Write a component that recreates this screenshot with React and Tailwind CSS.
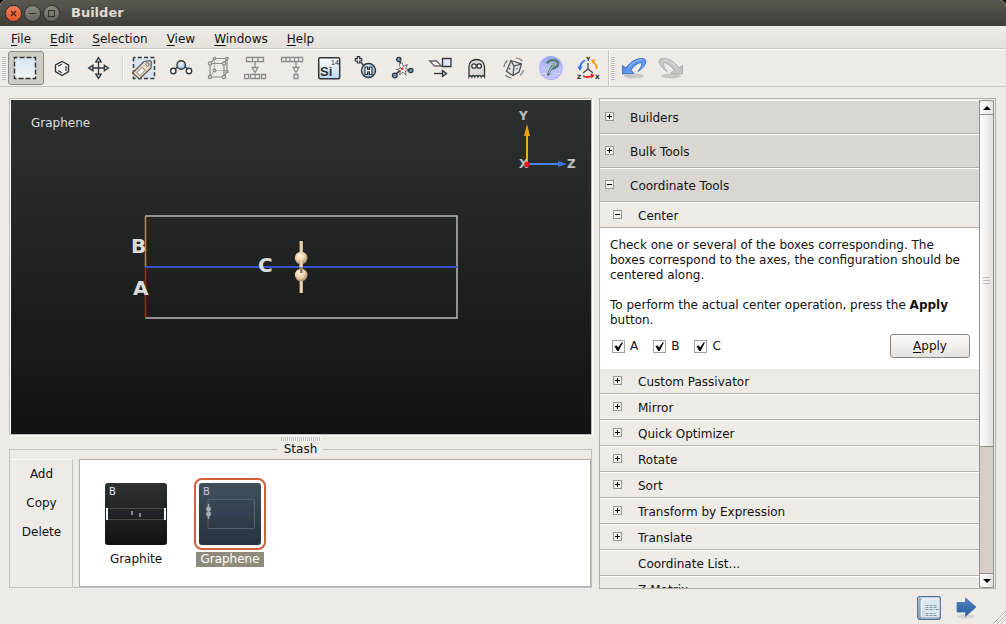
import { useState } from 'react'

const INK = '#2f3436'
const FADED = '#8b8b88'

function SelectIcon() {
  return (
    <>
      <defs>
        <linearGradient id="sel" x1="0" y1="0" x2="0" y2="1">
          <stop offset="0" stopColor="#d6e6f5" />
          <stop offset="1" stopColor="#f4f4f2" />
        </linearGradient>
      </defs>
      <rect x=".5" y="1.500" width="21" height="21" fill="url(#sel)" stroke={INK} strokeWidth="1.400" strokeDasharray="5 2" strokeDashoffset="2" />
    </>
  )
}

function RingIcon() {
  return (
    <g fill="none" stroke={INK} strokeWidth="1.400">
      <path d="M11 5.500l6.500 3.500v6.500L11 19.500l-6.500-4V9z" fill="#f5f4f2" />
      <path d="M7 10.200l4-2.200M15 10v5M7 14.500l4 2.300" strokeWidth="1.200" />
    </g>
  )
}

function MoveIcon() {
  return (
    <g stroke={INK} strokeWidth="1.300" fill="#c4d9ea">
      <path d="M10.500 6v12.500M4 12h13" />
      <path d="M10.500 1.500l2.700 4.300H7.800zM10.500 22.500l2.700-4.300H7.800zM.7 12l4.200-2.700v5.400zM20.500 12l-4.200-2.700v5.400z" />
    </g>
  )
}

function TagIcon() {
  return (
    <>
      <rect x=".5" y="1.500" width="21" height="21" fill="#d9e6f1" stroke={INK} strokeWidth="1.500" strokeDasharray="4 2.300" strokeDashoffset="2" />
      <path d="M-.5 17L11 5.500l6-.8 1.300 1.300-.3 6L6.500 23z" fill="#eed9c2" stroke="#5a5350" strokeWidth="1.200" />
      <circle cx="14.500" cy="8.500" r="1.600" fill="#fff" stroke="#5a5350" />
      <path d="M4 16.500l5-5.200 3.200 3L7 19.500z" fill="#fff" stroke="#777" />
    </>
  )
}

function MoleculeIcon() {
  return (
    <>
      <defs>
        <radialGradient id="mol" cx=".4" cy=".3" r=".8">
          <stop offset="0" stopColor="#f4f9fd" />
          <stop offset="1" stopColor="#8fb8da" />
        </radialGradient>
      </defs>
      <g stroke={INK} strokeWidth="1.400">
        <path d="M5 13l4-3M14 10l4 3" />
        <circle cx="11.200" cy="9" r="4.200" fill="url(#mol)" />
        <circle cx="3.300" cy="15" r="2.700" fill="#fff" />
        <circle cx="19" cy="15" r="2.700" fill="#fff" />
      </g>
    </>
  )
}

function CubeIcon() {
  return (
    <g stroke={FADED} strokeWidth="1.200" fill="none">
      <path d="M3 7.500h14v13.500H3zM3 7.500l4.500-5h12.500v13L17 21M17 7.500l3-5" />
      <path d="M7.500 2.500v12H20M7.500 14.500L3 21" opacity=".5" />
      <g fill="#dedcd9">
        <circle cx="3" cy="7.500" r="1.700" />
        <circle cx="17" cy="7.500" r="1.700" />
        <circle cx="3" cy="21" r="1.700" />
        <circle cx="17" cy="21" r="1.700" />
        <circle cx="20" cy="2.500" r="1.200" />
        <circle cx="20" cy="15.500" r="1.200" />
        <circle cx="7.500" cy="14.500" r="1.400" />
        <circle cx="7.500" cy="2.500" r="1.200" />
      </g>
    </g>
  )
}

function SplitIcon() {
  return (
    <g stroke={FADED} strokeWidth="1.300" fill="#f5f4f2">
      <path d="M2.500 1.500h17v4h-17zM8.500 2v3M14 2v3" />
      <path d="M11 6v5.500M8 11.500h6L11 16.500z" />
      <path d="M.6 18.500h4v4h-4zM6.500 18.500h9v4h-9zM11 18.500v4M17.500 18.500h4v4h-4z" />
    </g>
  )
}

function ReduceIcon() {
  return (
    <g stroke={FADED} strokeWidth="1.300" fill="#f5f4f2">
      <path d="M.6 1.500h21v4H.6zM5 2v3M9 2v3M13.500 2v3M17.500 2v3" />
      <path d="M15 6v5.500M12 11.500h6L15 16.500zM13 18.500h4v4h-4z" />
    </g>
  )
}

function ElementIcon() {
  return (
    <>
      <defs>
        <linearGradient id="si" x1="0" y1="0" x2="0" y2="1">
          <stop offset="0" stopColor="#fff" />
          <stop offset="1" stopColor="#bdd6ee" />
        </linearGradient>
      </defs>
      <rect x=".7" y="1.700" width="21" height="21" rx="1.500" fill="url(#si)" stroke={INK} strokeWidth="1.500" />
      <text x="2" y="20" fontSize="13" fontWeight="bold" fill="#333" fontFamily="Liberation Sans, sans-serif">Si</text>
      <text x="13" y="9" fontSize="7" fill="#222" fontFamily="Liberation Sans, sans-serif">14</text>
    </>
  )
}

function HydrogenIcon() {
  return (
    <>
      <defs>
        <radialGradient id="hyd" cx=".4" cy=".3" r=".8">
          <stop offset="0" stopColor="#e4f0fb" />
          <stop offset="1" stopColor="#7fb2ea" />
        </radialGradient>
      </defs>
      <path d="M5.500 6l4 4" stroke={INK} strokeWidth="1.500" />
      <path d="M2.400.7h2.300v2h2v2.300h-2v2H2.400V5H.4V2.700h2z" fill="#fff" stroke={INK} strokeWidth="1.200" />
      <circle cx="13.500" cy="14.500" r="7" fill="url(#hyd)" stroke={INK} strokeWidth="1.400" />
      <path d="M10 11h2.600v2.300h1.800V11H17v7.500h-2.600v-2.600h-1.800v2.600H10z" fill="#fff" stroke={INK} strokeWidth="1.200" />
    </>
  )
}

function NetworkIcon() {
  return (
    <>
      <path d="M7 3l3 10L2.500 19M10 13l9 1.500" stroke={INK} strokeWidth="1.500" fill="none" />
      <path d="M10 6.500l1.500 4 4-2-1.800 4 4 2-4.200.5.500 4.200-3-3-3.500 2.700 1-4.200-4-1.200 4-1.200-1.300-4z" fill="#f3efeb" stroke="#555" strokeWidth=".8" />
      <circle cx="10.300" cy="12.800" r="1.300" fill="#d22" />
      <g fill="#6c9dc0" stroke={INK} strokeWidth="1.200">
        <circle cx="6.800" cy="3.500" r="2.200" />
        <circle cx="2.800" cy="19.500" r="2.400" />
        <circle cx="18.800" cy="14.500" r="2.200" />
      </g>
    </>
  )
}

function PlaneIcon() {
  return (
    <g stroke={INK} strokeWidth="1.300">
      <path d="M.7 5h7l4.500 5H5.500z" fill="#fff" stroke="#666" />
      <path d="M13.500 2.500h8.500v8h-8.500z" fill="#dbe7f2" />
      <path d="M5 17.500h9" />
      <path d="M13.500 14.500v6l4-3z" fill="#9fc3e2" />
    </g>
  )
}

function GhostIcon() {
  return (
    <g stroke={INK} strokeWidth="1.300">
      <path d="M3 21V10.500C3 6 6.500 3.500 10.500 3.500S18 6 18.500 10.500V21c-1.300-2-2.300-2-3.300 0-1-2-2.500-2-3.300 0-1-2-2.500-2-3.300 0-1-2-2.200-2-2.800 0C5 19.300 4 19.300 3 21z" fill="#dcdbd9" />
      <circle cx="8" cy="10" r="2.200" fill="#fff" />
      <circle cx="13.200" cy="10" r="2.200" fill="#fff" />
    </g>
  )
}

function ShakeIcon() {
  return (
    <g fill="none" stroke="#4b4b49" strokeWidth="1.200">
      <path d="M8 4.500l10.500 3.500-2.500 8-6 3.500-6.500-4z" fill="#dfe3e6" />
      <path d="M8 4.500l3 5.500 7.500-2M11 10l-1 9.500" />
      <path d="M6 12.500l1 .5M13.500 13l1-.5" strokeWidth="1.400" />
      <path d="M1 11c.3-3 1.500-5 3.500-6.500M13 2c3 .3 5 1.300 6.500 3M20.500 14c-.5 2.500-1.500 4-3.500 5.500M8.500 22c-2.500-.3-4.500-1.300-6-3" stroke="#777" />
    </g>
  )
}

function WizardIcon() {
  return (
    <>
      <defs>
        <linearGradient id="wiz" x1="0" y1="0" x2="0" y2="1">
          <stop offset="0" stopColor="#98a2f2" />
          <stop offset=".55" stopColor="#bfc4fa" />
          <stop offset="1" stopColor="#a0a5f6" />
        </linearGradient>
      </defs>
      <circle cx="11" cy="12" r="12" fill="url(#wiz)" />
      <path d="M1.500 17.500h6M13 17.500h7.500M3.500 20h15M6.500 22.300h9" stroke="#e8eaff" strokeOpacity=".8" fill="none" />
      <path d="M7 7.500c1.500-4 10.500-4.500 11-.5.300 3.500-3.500 5.500-8 6" fill="none" stroke="#557f78" strokeWidth="2.600" />
      <path d="M13.500 7.500c1 2-4.500 5-5.500 12" fill="none" stroke="#496f66" strokeWidth="2.400" />
      <path d="M8.500 8.500c1.500-1 4-.5 5 .5M13.500 8.500c.5 2-3.500 4-4.800 8.500" fill="none" stroke="#a9cdb6" strokeWidth="1.200" />
    </>
  )
}

function AxesIcon() {
  return (
    <>
      <path d="M11 7v6l-5 4M11 13l5 4" fill="none" stroke="#444" strokeWidth="1.300" />
      <path d="M8 4.500c-2.500 1-4.500 3.500-5 7" fill="none" stroke="#2874e0" strokeWidth="1.800" />
      <path d="M.6 10.500h5L2.800 15z" fill="#2874e0" />
      <path d="M19.500 13c.3-3-1.500-6-4-7.500" fill="none" stroke="#f29a16" strokeWidth="1.800" />
      <path d="M13.500 3.500l5 .3-2.500 4z" fill="#f29a16" />
      <path d="M6 20c3 1.300 6 1.300 9 0" fill="none" stroke="#e01818" strokeWidth="1.800" />
      <path d="M13.500 17.500l4 1.500-3 3.500z" fill="#e01818" />
      <g fontFamily="DejaVu Sans, sans-serif" fontWeight="bold" fontSize="6" fill="#222">
        <text x="9" y="5">Y</text>
        <text x="0" y="23">Z</text>
        <text x="18" y="23">X</text>
      </g>
    </>
  )
}

function CurvedArrow({ id, from, to, edge, flip }) {
  return (
    <g transform={flip ? 'translate(24 0) scale(-1 1)' : undefined}>
      <defs>
        <linearGradient id={id} x1="0" y1="0" x2="1" y2="1">
          <stop offset="0" stopColor={from} />
          <stop offset="1" stopColor={to} />
        </linearGradient>
      </defs>
      <ellipse cx="12" cy="20" rx="10" ry="2.500" fill="#000" opacity=".16" />
      <path
        d="M.5 9.500V18l11.500-.8-3-3C12 10 15.500 7 18.500 6.800c2.300 0 1 4.200-2.500 8.700C21.500 12 24.500 7.500 23.700 4.500 22.800 1.800 17 2 12.500 4.300 9 6.200 6 9 4 12z"
        fill={`url(#${id})`}
        stroke={edge}
        strokeWidth=".8"
      />
      <path d="M6.500 11.500C10 7 15 4 20 3.500" fill="none" stroke="#fff" strokeOpacity=".45" strokeWidth="1.200" />
    </g>
  )
}

const tools = [
  [
    { label: 'Select', icon: <SelectIcon />, active: true },
    { label: 'Ring', icon: <RingIcon /> },
    { label: 'Move', icon: <MoveIcon /> },
  ],
  [
    { label: 'Tags', icon: <TagIcon /> },
    { label: 'Molecule', icon: <MoleculeIcon /> },
    { label: 'Cell', icon: <CubeIcon /> },
    { label: 'Split', icon: <SplitIcon /> },
    { label: 'Reduce', icon: <ReduceIcon /> },
    { label: 'Element', icon: <ElementIcon /> },
    { label: 'Add hydrogen', icon: <HydrogenIcon /> },
    { label: 'Fragment', icon: <NetworkIcon /> },
    { label: 'Plane', icon: <PlaneIcon /> },
    { label: 'Ghost', icon: <GhostIcon /> },
    { label: 'Rattle', icon: <ShakeIcon /> },
    { label: 'Wizard', icon: <WizardIcon /> },
    { label: 'Swap axes', icon: <AxesIcon /> },
  ],
  [
    { label: 'Undo', icon: <CurvedArrow id="undo" from="#2f6fdd" to="#8fc0fa" edge="#2860c8" /> },
    { label: 'Redo', icon: <CurvedArrow id="redo" from="#b9b8b6" to="#d6d5d3" edge="#a3a2a0" flip /> },
  ],
]

const menus = ['File', 'Edit', 'Selection', 'View', 'Windows', 'Help']
const groups = ['Builders', 'Bulk Tools', 'Coordinate Tools']
const coordinateTools = [
  'Custom Passivator',
  'Mirror',
  'Quick Optimizer',
  'Rotate',
  'Sort',
  'Transform by Expression',
  'Translate',
]

function TitleBar() {
  return (
    <header className="flex h-[26px] shrink-0 items-center rounded-t-md bg-linear-to-b from-[#5a574f] to-[#3e3d38] pl-[5px]">
      <button type="button" aria-label="Close" className="flex size-[17px] items-center justify-center rounded-full border border-[#33322e] bg-linear-to-b from-[#f5805a] to-[#e0532a]">
        <svg viewBox="0 0 9 9" className="size-[9px]" stroke="#45261b" strokeWidth="1.200">
          <path d="M2 2l5 5M7 2L2 7" />
        </svg>
      </button>
      <button type="button" aria-label="Minimize" className="ml-0.5 flex size-[17px] items-center justify-center rounded-full border border-[#33322e] bg-linear-to-b from-[#8d8a80] to-[#66645c]">
        <span className="h-px w-[7px] bg-[#32312c]" />
      </button>
      <button type="button" aria-label="Maximize" className="ml-0.5 flex size-[17px] items-center justify-center rounded-full border border-[#33322e] bg-linear-to-b from-[#8d8a80] to-[#66645c]">
        <span className="size-[7px] border border-[#32312c]" />
      </button>
      <h1 className="ml-[11px] text-[13px] font-bold text-[#dfdbd2]">Builder</h1>
    </header>
  )
}

function MenuBar() {
  return (
    <nav className="flex h-[23px] shrink-0 items-center gap-[19px] border-b border-[#cfccc7] bg-linear-to-b from-[#eeebe7] to-[#e4e1dc] pl-[11px]">
      {menus.map((menu) => (
        <button key={menu} type="button" className="pt-1 leading-[18px]">
          <span className="underline underline-offset-2">{menu[0]}</span>
          {menu.slice(1)}
        </button>
      ))}
    </nav>
  )
}

function Grip() {
  return <span className="h-[23px] w-[4px] bg-[repeating-linear-gradient(to_bottom,#c0bdb8_0_1px,#f8f7f5_1px_2px)]" />
}

function ToolButton({ label, icon, active }) {
  return (
    <button
      type="button"
      aria-label={label}
      aria-pressed={active}
      className={`flex h-[34px] w-[36px] items-center rounded-[3px] pl-[5px] ${
        active ? 'border border-[#8f8b86] bg-[#cfcac4]' : 'border border-transparent'
      }`}
    >
      <svg viewBox="0 0 24 24" className="size-6 shrink-0 overflow-visible">
        {icon}
      </svg>
    </button>
  )
}

function Toolbar() {
  return (
    <div role="toolbar" className="flex h-[38px] shrink-0 items-center gap-px border-t border-b border-t-white border-b-[#cbc8c4] pl-0.5">
      <span className="flex w-[5px]">
        <Grip />
      </span>
      {tools[0].map((tool) => (
        <ToolButton key={tool.label} {...tool} />
      ))}
      <span className="flex w-[7px] justify-center">
        <span className="h-6 w-0.5 border-r border-l border-r-white border-l-[#d5d2ce]" />
      </span>
      {tools[1].map((tool) => (
        <ToolButton key={tool.label} {...tool} />
      ))}
      <span className="flex w-[7px] items-center justify-between self-stretch border-l border-[#c4c1bd]">
        <span className="w-px self-stretch bg-white" />
        <Grip />
      </span>
      {tools[2].map((tool) => (
        <ToolButton key={tool.label} {...tool} />
      ))}
    </div>
  )
}

function Scene() {
  return (
    <svg viewBox="0 0 580 334" className="absolute inset-0 size-full" fontFamily="DejaVu Sans, sans-serif" fontWeight="bold">
      <defs>
        <radialGradient id="atom" cx=".4" cy=".35" r=".7">
          <stop offset="0" stopColor="#fff3e0" />
          <stop offset=".6" stopColor="#e8c9a3" />
          <stop offset="1" stopColor="#8d7860" />
        </radialGradient>
        <linearGradient id="rod">
          <stop offset="0" stopColor="#c9a97e" />
          <stop offset=".5" stopColor="#fae6c4" />
          <stop offset="1" stopColor="#b3946b" />
        </linearGradient>
      </defs>
      <path d="M134 116h312v102H134" fill="none" stroke="#b9b9b9" strokeWidth="1.500" />
      <path d="M134.500 116v51" stroke="#d9861d" strokeWidth="1.500" />
      <path d="M134.500 167v51" stroke="#c8161a" strokeWidth="1.500" />
      <path d="M134 167h312" stroke="#3650c8" strokeWidth="2" />
      <rect x="288.500" y="141" width="3.500" height="52" fill="url(#rod)" />
      <circle cx="290.200" cy="158" r="6.300" fill="url(#atom)" />
      <circle cx="290.200" cy="175" r="6.300" fill="url(#atom)" />
      <rect x="288.500" y="160" width="3.500" height="7" fill="url(#rod)" />
      <rect x="289" y="167" width="2.500" height="6" fill="#8a7a66" />
      <g fill="#dcdcdc" fontSize="20">
        <text x="120" y="153">B</text>
        <text x="122" y="195">A</text>
        <text x="247" y="172">C</text>
      </g>
      <path d="M516 64V34" stroke="#f2a90a" strokeWidth="2" />
      <path d="M516 24l3 12h-6z" fill="#f0a010" />
      <g fill="#c0c0c0" fontSize="12">
        <text x="508" y="20">Y</text>
        <text x="508" y="68">X</text>
        <text x="556" y="68">Z</text>
      </g>
      <path d="M516 64h34" stroke="#4a86f0" strokeWidth="2" />
      <path d="M556 64l-9-3v6z" fill="#3f74e0" />
      <circle cx="516" cy="64.500" r="2.800" fill="#f01010" />
    </svg>
  )
}

function Viewport() {
  return (
    <div className="flex min-h-0 flex-1 border border-[#c0bcb7] bg-white pt-px pl-px shadow-[1px_1px_0_#fff]">
      <div className="relative flex-1 bg-linear-to-b from-[#2f3131] to-[#121212]">
        <p className="pt-4 pl-5 leading-[15px] text-[#dedede]">Graphene</p>
        <Scene />
      </div>
    </div>
  )
}

function GraphiteThumb() {
  return (
    <svg viewBox="0 0 62 62" className="size-[62px] rounded-[3px] bg-linear-to-b from-[#303232] to-[#131313]">
      <path d="M2 25.500h58M2 36.500h58" stroke="#4b4d4d" />
      <path d="M3 31h56" stroke="#20243c" />
      <path d="M1 25h2v12H1zM59 25h2v12h-2z" fill="#f2fafa" />
      <path d="M27 28v4M35 30v4" stroke="#aeb0b0" strokeWidth="1.500" />
      <text x="4" y="12" fontSize="10" fill="#e6e6e6" fontFamily="DejaVu Sans, sans-serif">B</text>
    </svg>
  )
}

function GrapheneThumb() {
  return (
    <svg viewBox="0 0 62 62" className="size-[62px] rounded-[3px] bg-linear-to-b from-[#414f5c] to-[#27333e]">
      <path d="M9 16.500h46.500v29H9z" fill="none" stroke="#52606b" />
      <path d="M9 31h46" stroke="#33466a" />
      <path d="M9 31v14" stroke="#5a3f4a" />
      <path d="M9.500 21v15" stroke="#9aa5ad" strokeWidth="1.500" />
      <circle cx="9.500" cy="26" r="2.500" fill="#a3adb3" />
      <circle cx="9.500" cy="31" r="2.500" fill="#a3adb3" />
      <text x="4" y="12" fontSize="10" fill="#c5d0d8" fontFamily="DejaVu Sans, sans-serif">B</text>
    </svg>
  )
}

function StashItem({ name, thumb, selected, onSelect }) {
  return (
    <button type="button" aria-pressed={selected} onClick={onSelect} className="flex flex-col items-center gap-0.5">
      <span className={`rounded-lg border-2 p-[3px] ${selected ? 'border-[#d2603c]' : 'border-transparent'}`}>{thumb}</span>
      <span className={`px-1 leading-[15px] ${selected ? 'bg-[#8f8b7b] text-white' : ''}`}>{name}</span>
    </button>
  )
}

function Stash() {
  const [selected, setSelected] = useState('Graphene')

  return (
    <fieldset className="min-w-0 border border-[#c4c1bd]">
      <legend className="mx-auto px-1.5 leading-[15px]">Stash</legend>
      <div className="flex h-[130px] gap-1.5 pt-0.5 pl-px">
        <div className="flex w-[62px] shrink-0 flex-col border-t border-r border-t-white border-r-[#c4c1bd]">
          {['Add', 'Copy', 'Delete'].map((action) => (
            <button key={action} type="button" className="h-[29px] pb-px">
              {action}
            </button>
          ))}
        </div>
        <div className="flex min-w-0 flex-1 items-start gap-[22px] border border-[#b4afa8] bg-white pt-[18px] pl-5">
          <StashItem name="Graphite" thumb={<GraphiteThumb />} selected={selected === 'Graphite'} onSelect={() => setSelected('Graphite')} />
          <StashItem name="Graphene" thumb={<GrapheneThumb />} selected={selected === 'Graphene'} onSelect={() => setSelected('Graphene')} />
        </div>
      </div>
    </fieldset>
  )
}

function Expander({ open }) {
  return (
    <svg viewBox="0 0 9 9" className="-mt-0.5 size-[9px] shrink-0" shapeRendering="crispEdges">
      <rect x=".5" y=".5" width="8" height="8" fill="#f4f2ef" stroke="#98958f" />
      <path d={open ? 'M2 4.500h5' : 'M2 4.500h5M4.500 2v5'} stroke="#000" />
    </svg>
  )
}

function GroupRow({ name, open }) {
  return (
    <button
      type="button"
      aria-expanded={open}
      className="flex h-[34px] w-full shrink-0 items-center gap-4 border-t border-b border-t-white border-b-[#b3b0ac] bg-[#dad7d2] pt-px pl-[5px] text-left"
    >
      <Expander open={open} />
      {name}
    </button>
  )
}

function ToolRow({ name, open }) {
  return (
    <button
      type="button"
      aria-expanded={open}
      className="flex h-[26px] w-full shrink-0 items-center gap-4 border-t border-b border-t-white border-b-[#b3b0ac] bg-[#eeebe7] pt-px pl-[13px] text-left"
    >
      <Expander open={open} />
      {name}
    </button>
  )
}

function LeafRow({ name }) {
  return (
    <button
      type="button"
      className="flex h-[26px] w-full shrink-0 items-center border-t border-b border-t-white border-b-[#b3b0ac] bg-[#eeebe7] pt-px pl-[38px] text-left"
    >
      {name}
    </button>
  )
}

function AxisCheckbox({ axis }) {
  return (
    <label className="flex items-center gap-[5px]">
      <span className="grid">
        <input type="checkbox" defaultChecked className="peer col-start-1 row-start-1 size-[13px] appearance-none border border-[#a5a29d] bg-white" />
        <svg viewBox="0 0 13 13" className="pointer-events-none invisible col-start-1 row-start-1 size-[13px] peer-checked:visible">
          <path d="M2.500 6l2.200-.5 1.300 2L10 2l.8.8L6.500 11H5.200z" fill="#000" />
        </svg>
      </span>
      {axis}
    </label>
  )
}

function CenterForm() {
  return (
    <form className="shrink-0 bg-white pt-[10px] pr-[9px] pb-[10px] pl-[10px] leading-[15px]" onSubmit={(e) => e.preventDefault()}>
      <p>Check one or several of the boxes corresponding. The boxes correspond to the axes, the configuration should be centered along.</p>
      <p className="mt-[15px]">
        To perform the actual center operation, press the <b>Apply</b> button.
      </p>
      <div className="mt-1.5 flex items-center gap-[15px] pl-0.5">
        <AxisCheckbox axis="A" />
        <AxisCheckbox axis="B" />
        <AxisCheckbox axis="C" />
        <button type="submit" className="ml-auto h-6 w-20 rounded-[3px] border border-[#8c8780] bg-linear-to-b from-[#fcfbfa] to-[#e6e2dd]">
          <span className="underline underline-offset-2">A</span>pply
        </button>
      </div>
    </form>
  )
}

function ScrollBar() {
  return (
    <div className="flex w-[15px] shrink-0 flex-col border-r border-l border-[#948f88] bg-[#d6cec6]">
      <button type="button" aria-label="Scroll up" className="flex h-[15px] shrink-0 items-center justify-center rounded-t-[3px] border-t border-b border-[#948f88] bg-linear-to-r from-white to-[#e8e4df]">
        <svg viewBox="0 0 8 4" className="h-1 w-2">
          <path d="M4 0l4 4H0z" />
        </svg>
      </button>
      <div className="flex flex-[331] flex-col items-center justify-center gap-0.5 border-b border-[#948f88] bg-linear-to-r from-white to-[#e2deda]">
        <span className="h-px w-[7px] bg-[#bfbab4]" />
        <span className="h-px w-[7px] bg-[#bfbab4]" />
        <span className="h-px w-[7px] bg-[#bfbab4]" />
      </div>
      <div className="flex-[126]" />
      <button type="button" aria-label="Scroll down" className="flex h-[15px] shrink-0 items-center justify-center rounded-b-[3px] border-t border-b border-[#948f88] bg-linear-to-r from-white to-[#e8e4df]">
        <svg viewBox="0 0 8 4" className="h-1 w-2">
          <path d="M0 0h8L4 4z" />
        </svg>
      </button>
    </div>
  )
}

function ToolPanel() {
  return (
    <aside className="flex min-h-0 min-w-0 border border-[#b3afa9] pt-px pr-px">
      <div className="flex min-w-0 flex-1 flex-col overflow-x-hidden overflow-y-auto [scrollbar-width:none]">
        {groups.map((name) => (
          <GroupRow key={name} name={name} open={name === 'Coordinate Tools'} />
        ))}
        <ToolRow name="Center" open />
        <CenterForm />
        {coordinateTools.map((name) => (
          <ToolRow key={name} name={name} open={false} />
        ))}
        <LeafRow name="Coordinate List..." />
        <LeafRow name="Z-Matrix..." />
      </div>
      <ScrollBar />
    </aside>
  )
}

function StatusBar() {
  return (
    <footer className="flex h-[35px] shrink-0 items-center justify-end">
      <button type="button" aria-label="Script" className="pt-0.5">
        <svg viewBox="0 0 24 24" className="size-6">
          <defs>
            <linearGradient id="doc" x1="0" y1="0" x2="0" y2="1">
              <stop offset="0" stopColor="#e9f1f6" />
              <stop offset="1" stopColor="#a9c0d3" />
            </linearGradient>
          </defs>
          <rect x=".7" y=".7" width="22.600" height="22.600" rx="2" fill="url(#doc)" stroke="#4f6f8b" strokeWidth="1.200" />
          <path d="M1.500 2h3v20h-3z" fill="#6e8aa3" opacity=".6" />
          <path d="M4.500 4v17" stroke="#f7fafc" strokeWidth="1.500" />
          <path d="M6.500 5h16v16h-16z" fill="#dbe7ef" />
          <path d="M8.500 9.500h11M8.500 11.500h12M8.500 13.500h9M18.500 13.500h3M8.500 17.500h10M8.500 19.500h12" stroke="#8b98a2" strokeWidth="1" strokeDasharray="3 1" />
        </svg>
      </button>
      <button type="button" aria-label="Send" className="mr-4 ml-[15px] pt-0.5">
        <svg viewBox="0 0 21 22" className="h-[22px] w-[21px]">
          <defs>
            <linearGradient id="send" x1="0" y1="0" x2="0" y2="1">
              <stop offset="0" stopColor="#4d84c4" />
              <stop offset="1" stopColor="#2b5c9e" />
            </linearGradient>
          </defs>
          <ellipse cx="10" cy="19.500" rx="9" ry="2" fill="#000" opacity=".1" />
          <path d="M1 5.500h8.500V1L20 10 9.500 19.500V15H1z" fill="url(#send)" stroke="#3a6fb0" strokeWidth=".8" />
        </svg>
      </button>
      <svg viewBox="0 0 13 13" className="size-[13px] self-end" stroke="#b5b1ac">
        <path d="M0 13L13 0M4 13l9-9M8 13l5-5" />
        <path d="M1 13L13 1M5 13l8-8M9 13l4-4" stroke="#fff" />
      </svg>
    </footer>
  )
}

export default function App() {
  return (
    <div className="bg-black">
      <div className="flex h-screen flex-col overflow-hidden rounded-t-md bg-[#eeebe7] font-['DejaVu_Sans',sans-serif] text-[12px] text-[#111]">
        <TitleBar />
        <MenuBar />
        <Toolbar />
        <main className="grid min-h-0 flex-1 grid-cols-[583fr_397fr] grid-rows-1 gap-[7px] pt-[11px] pr-[10px] pl-[9px]">
          <div className="flex min-h-0 min-w-0 flex-col pb-px">
            <Viewport />
            <div className="flex h-[7px] shrink-0 items-center justify-center">
              <span className="h-1 w-10 bg-[repeating-linear-gradient(to_right,#c0bdb8_0_1px,#f8f7f5_1px_2px)]" />
            </div>
            <Stash />
          </div>
          <ToolPanel />
        </main>
        <StatusBar />
      </div>
    </div>
  )
}
